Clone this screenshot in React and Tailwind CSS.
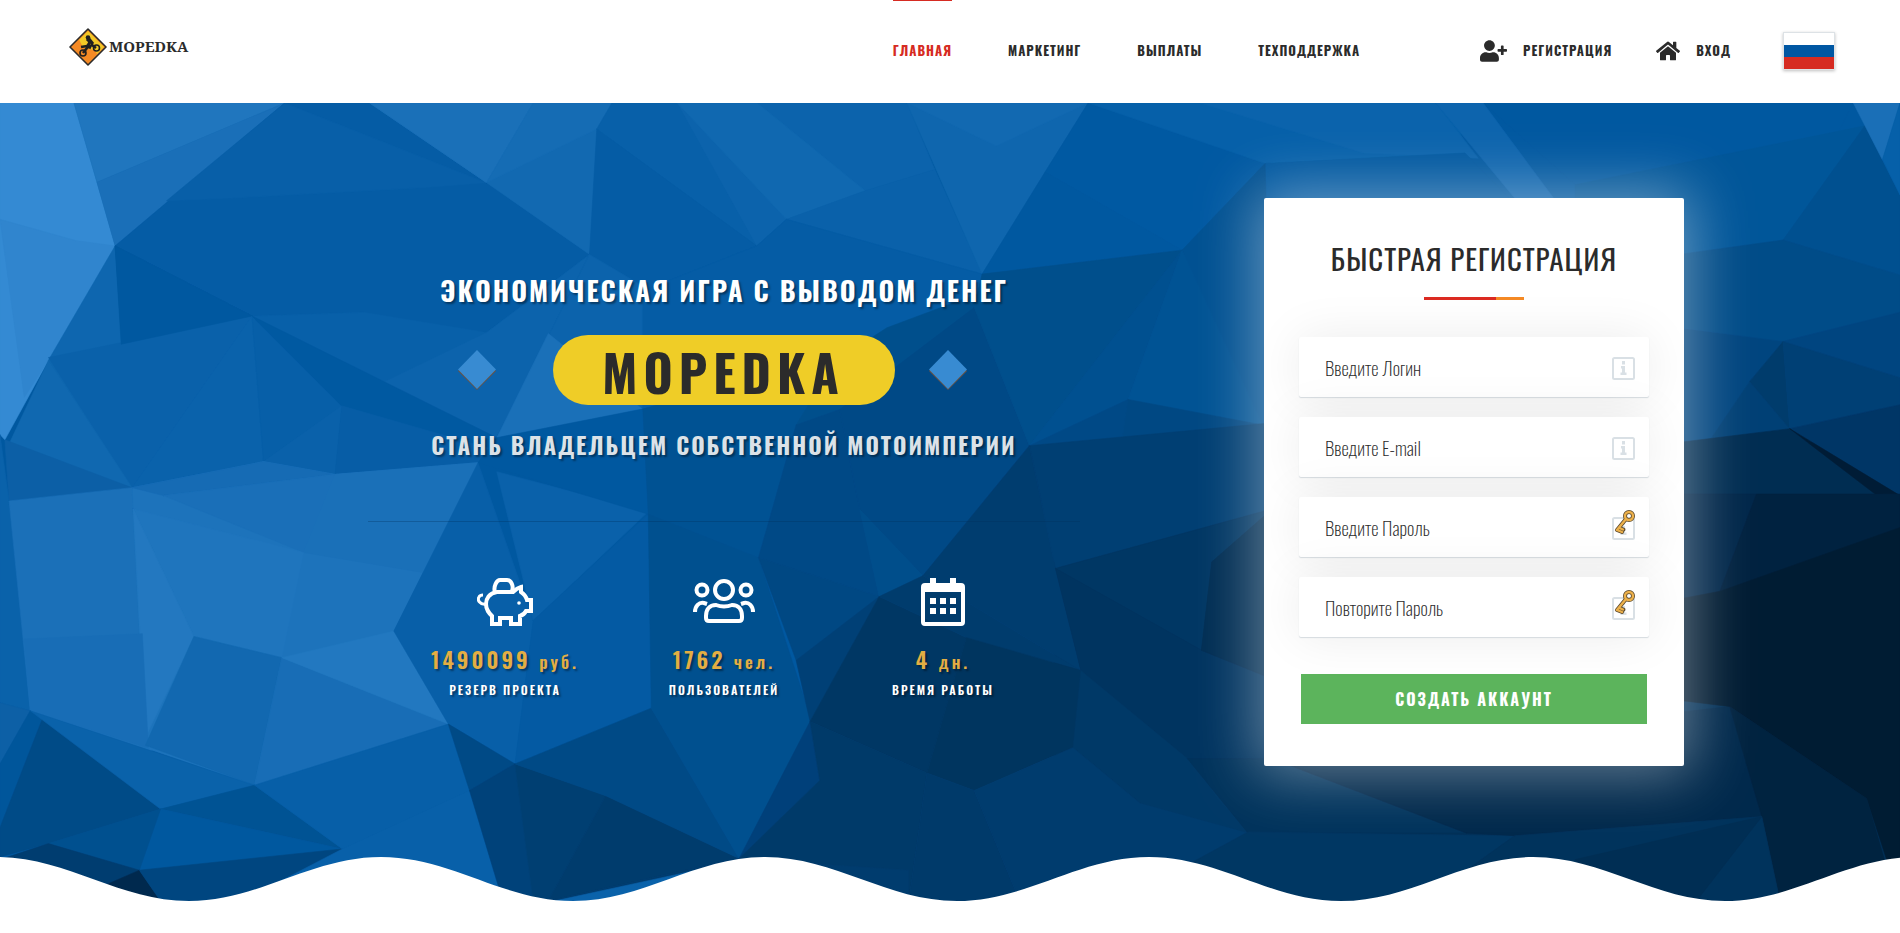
import { FaUserPlus, FaHome } from "react-icons/fa";

const facets = [
  ["#002f56", "1740,700 3136,640 3136,1508 1740,1508"],
  ["#348ad3", "0,6 122,6 190,275 80,490 8,640 0,630"],
  ["#3085ce", "0,225 125,265 190,275 80,490 40,560"],
  ["#2076be", "122,6 470,6 160,155"],
  ["#1a6fb8", "470,6 190,275 160,155"],
  ["#055ca5", "470,6 190,275 416,407 803,438 973,291 803,156 610,6"],
  ["#085fa8", "470,6 803,156 690,166 400,184 275,190"],
  ["#0860a9", "416,407 600,400 803,438 619,539"],
  ["#0c63ac", "803,438 973,291 820,636 619,539"],
  ["#1269b1", "610,6 1010,6 973,291 803,156"],
  ["#1a70b8", "610,6 880,6 803,156"],
  ["#156cb4", "880,6 1010,6 985,55 803,156"],
  ["#0860a9", "1010,6 1118,6 1249,275 985,55"],
  ["#055ca5", "985,55 973,291 1060,360 1249,275"],
  ["#0c63ac", "1118,6 1497,6 1543,131 1428,171 1298,225 1249,275"],
  ["#1068b0", "1118,6 1250,6 1428,171 1298,225"],
  ["#0a61aa", "1428,171 1543,131 1621,328 1298,225"],
  ["#055ca5", "1249,275 1298,225 1621,328 1608,391 1386,480 1060,582 1060,360"],
  ["#0c63ac", "973,291 820,636 1060,582 1060,350"],
  ["#1a70b8", "820,636 1060,582 905,440"],
  ["#0e66af", "190,275 80,490 218,730"],
  ["#0058a0", "190,275 416,407 218,730"],
  ["#0a61aa", "80,485 416,407 218,730"],
  ["#0058a0", "190,275 416,407 200,460"],
  ["#1068b0", "80,490 218,730 12,655"],
  ["#0a62ab", "416,407 218,730 435,681"],
  ["#075fa8", "416,407 435,681 564,576"],
  ["#0059a1", "416,407 564,576 820,690 820,636"],
  ["#0a61aa", "435,681 564,576 553,705"],
  ["#075da6", "564,576 820,660 789,683 553,705"],
  ["#0c5fa6", "8,640 218,730 15,755"],
  ["#0a62aa", "0,630 15,755 50,1150 0,1135"],
  ["#1b70b8", "15,755 218,730 220,770 250,1225 50,1150"],
  ["#1d73bb", "218,730 435,681 553,705 789,683 650,1000 740,1175 420,1290 240,1220"],
  ["#166bb4", "218,730 435,681 553,705 270,745"],
  ["#1a6fb8", "270,745 553,705 501,852"],
  ["#1a70b8", "553,705 789,683 700,890 501,852"],
  ["#1f75bd", "220,770 501,852 465,1050 320,1010"],
  ["#2378c0", "220,770 320,1010 240,1200"],
  ["#186db6", "40,1015 235,1005 245,1220 50,1150"],
  ["#1268b0", "320,1010 465,1050 420,1290 240,1215"],
  ["#186db6", "465,1050 740,1175 420,1290"],
  ["#2278c0", "650,1000 740,1175 465,1050"],
  ["#085fa8", "789,683 650,1000 740,1175 850,1250 880,980"],
  ["#0a61aa", "820,700 1070,775 880,980"],
  ["#045aa3", "1070,780 880,980 850,1250 1075,1145"],
  ["#0d60a6", "0,1135 50,1150 0,1250"],
  ["#00569b", "0,1250 50,1150 70,1165 0,1370"],
  ["#004b87", "70,1165 265,1335 80,1400 0,1425 0,1370"],
  ["#0a62aa", "50,1150 420,1290 265,1335"],
  ["#005394", "420,1290 265,1335 565,1410"],
  ["#00589f", "265,1335 565,1410 230,1450"],
  ["#00508f", "265,1335 230,1450 80,1400"],
  ["#003d70", "80,1400 230,1450 170,1480 0,1430"],
  ["#00294e", "230,1450 265,1508 170,1480"],
  ["#004680", "230,1450 565,1410 420,1508 265,1508"],
  ["#075fa8", "420,1290 740,1175 775,1300 565,1410"],
  ["#0860a9", "565,1410 775,1300 830,1508 400,1508"],
  ["#004a86", "740,1175 850,1250 775,1300"],
  ["#00427a", "775,1300 850,1250 880,1508 830,1508"],
  ["#003f72", "850,1250 1000,1310 905,1508 880,1508"],
  ["#003c6d", "1000,1310 1220,1428 905,1508"],
  ["#004a86", "850,1250 1075,1145 1220,1428 1000,1310"],
  ["#0058a0", "820,636 1061,582 1070,780 789,683"],
  ["#005293", "1061,582 1386,480 1314,612 1252,862 1070,780"],
  ["#004f8c", "1380,490 1464,429 1621,362 1608,391 1699,651 1386,583 1314,612"],
  ["#004986", "1314,612 1386,583 1419,771 1451,935 1252,862"],
  ["#004986", "1386,583 1608,391 1699,651 1523,896 1419,771"],
  ["#004e8b", "1419,771 1523,896 1451,935"],
  ["#00508f", "1070,780 1252,862 1340,1170 1220,1428 1075,1145"],
  ["#004883", "1252,862 1451,935 1314,1055"],
  ["#004076", "1314,1055 1451,935 1337,1170"],
  ["#003764", "1451,935 1595,1012 1530,1267 1337,1170"],
  ["#003c6d", "1451,935 1523,896 1784,1074 1595,1012"],
  ["#00407a", "1337,1170 1353,1281 1220,1428"],
  ["#003a69", "1337,1170 1530,1267 1500,1508 1220,1428 1353,1281"],
  ["#003c6e", "1220,1428 1500,1450 1500,1508 905,1508"],
  ["#0a62aa", "915,1508 1150,1450 1060,1508"],
  ["#0f66ae", "1497,6 1796,6 1725,136 1621,328"],
  ["#1269b1", "1497,6 1796,6 1644,87"],
  ["#0059a2", "1796,6 1725,136 1951,283 2088,120"],
  ["#0058a0", "1725,136 1951,283 1621,328"],
  ["#0660a9", "1796,6 2400,6 2418,100 2088,120"],
  ["#0b63ac", "1980,6 2370,6 2440,110 2250,100"],
  ["#0058a0", "2088,120 2418,100 2540,240 2088,240"],
  ["#0058a0", "2448,6 3059,6 2943,264 2600,160"],
  ["#005699", "2600,160 3078,49 2943,264 2781,290 2600,240"],
  ["#0d64ad", "2370,6 2448,6 2600,240 2540,240"],
  ["#005192", "1951,283 2088,120 2100,640 2068,610"],
  ["#004f8c", "1621,328 1951,283 1699,651 1608,391"],
  ["#005090", "1951,283 1862,564 1699,651"],
  ["#005394", "1951,283 1862,564 2084,612"],
  ["#004986", "1699,651 1862,564 1843,708"],
  ["#004883", "1843,708 1862,564 2084,612"],
  ["#003f73", "1699,651 2100,608 2100,770 1742,882"],
  ["#003d6f", "1523,896 1699,651 1742,882 1784,1074"],
  ["#003764", "1742,882 2100,770 2000,870 1983,1036"],
  ["#003460", "1742,882 1983,1036 2100,1090 2100,1240 1960,1240 1784,1074"],
  ["#00355f", "1595,1012 1784,1074 1771,1219 1608,1300 1530,1267"],
  ["#003967", "1784,1074 1960,1240 2060,1380 1882,1324 1771,1219"],
  ["#003a6a", "1530,1267 1608,1300 1683,1508 1500,1508"],
  ["#003c6e", "1608,1300 1771,1219 1882,1324 2060,1380 2100,1508 1683,1508"],
  ["#00335c", "1960,1240 2100,1240 2420,1380 2060,1380"],
  ["#002e54", "1983,1036 2100,1090 2100,770 2000,870"],
  ["#003763", "2060,1378 2500,1385 2350,1508 1850,1508"],
  ["#00294c", "2100,1240 2855,1142 2908,1349 2500,1385 2420,1380"],
  ["#005090", "3078,49 3136,179 3136,330 2943,264"],
  ["#004c88", "2778,290 2943,264 3136,330 3136,400 2943,455 2778,429"],
  ["#00457f", "2770,429 2943,455 2888,530 2822,641 2770,650"],
  ["#004075", "2822,641 2888,530 2954,619"],
  ["#003c6c", "2943,455 2954,619 2888,530"],
  ["#004580", "2943,455 3136,400 3136,523"],
  ["#004075", "2943,455 3136,523 3136,574 2954,619"],
  ["#003666", "2954,619 3136,574 3136,745"],
  ["#002d52", "2770,645 2954,619 3095,742 2770,742"],
  ["#001c36", "2954,619 3136,745 3095,742"],
  ["#00274a", "2770,742 2899,742 2839,925 2770,940"],
  ["#002240", "2899,742 3136,742 3136,805 2839,925"],
  ["#001c33", "2770,940 2839,925 3136,805 3136,1508 3114,1430 3081,1315 2855,1142 2770,1130"],
  ["#002340", "2855,1142 3081,1315 3130,1508 2938,1508 2908,1349"],
  ["#00335c", "2500,1385 2908,1349 2938,1508 2350,1508"],
  ["#002e54", "2600,1430 2908,1349 2800,1508 2650,1508"],
  ["#1a6fb7", "3059,6 3136,6 3107,113"],
  ["#0660a9", "3136,6 3136,179 3107,113"],
];

function PolyBackdrop() {
  return (
    <svg
      className="absolute inset-0 h-full w-full"
      viewBox="0 6 3136 1502"
      preserveAspectRatio="none"
      aria-hidden="true"
    >
      <rect y="6" width="3136" height="1502" fill="#0058a0" />
      {facets.map(([color, points], i) => (
        <polygon key={i} points={points} fill={color} stroke={color} strokeWidth="1" />
      ))}
    </svg>
  );
}

function Wave() {
  return (
    <svg
      className="absolute bottom-0 left-0 h-[46px] w-full"
      viewBox="0 0 1900 46"
      preserveAspectRatio="none"
      aria-hidden="true"
    >
      <path
        fill="#fff"
        d="M-3 2C67 2 119 46 189 46S311 2 381 2S503 46 573 46S695 2 765 2S887 46 957 46S1079 2 1149 2S1271 46 1341 46S1463 2 1533 2S1655 46 1725 46S1847 2 1917 2V46H-3Z"
      />
    </svg>
  );
}

function LogoMark() {
  return (
    <svg width="38" height="38" viewBox="0 0 38 38" aria-hidden="true">
      <path d="M19 1 37 19 19 37 1 19Z" fill="#f58a25" stroke="#2b2b2b" strokeWidth="1.6" strokeLinejoin="round" />
      <path d="M19 3 35 19 28 26C26 20 20 22 16 20S12 14 10 12Z" fill="#f2c927" />
      <g fill="none" stroke="#1f1f1f">
        <circle cx="14" cy="25" r="3" strokeWidth="1.6" />
        <circle cx="27.5" cy="20" r="3" strokeWidth="1.6" />
        <path d="M14 25l4-5 5-3 4 3M12 19l6-1 4 2" strokeWidth="2.6" />
        <path d="M18 19l3-5-3-3M20 11l4 5" strokeWidth="3" />
      </g>
      <circle cx="19" cy="9.5" r="2.3" fill="#1f1f1f" />
    </svg>
  );
}

function RussianFlag() {
  return (
    <svg className="block h-full w-full" viewBox="0 0 50 36" preserveAspectRatio="none" aria-hidden="true">
      <rect width="50" height="12" fill="#fff" />
      <rect y="12" width="50" height="12" fill="#0057a3" />
      <rect y="24" width="50" height="12" fill="#d62b22" />
    </svg>
  );
}

function Diamond() {
  return (
    <svg width="38" height="40" viewBox="0 0 38 40" aria-hidden="true">
      <path d="M19 2 38 21 19 40 0 21Z" fill="#6b5140" />
      <path d="M19 0 38 19.500 19 39 0 19.500Z" fill="#388bd2" />
    </svg>
  );
}

function PiggyIcon() {
  return (
    <svg width="56" height="48" viewBox="0 0 56 48" fill="none" stroke="#fff" strokeWidth="4" aria-hidden="true">
      <path d="M18 15C16 8 20 2 23 2H30C34 2 37 8 35 13" />
      <path d="M20 14C12 15 9 21 9 26C9 32 12 35 15 38V46H23V40H34V46H43V38C46 37 48 35 49 33H54V22H50C49 18 47 16 44 14V9C40 10 38 12 36 14Z" />
      <path d="M9 26C3 27 0 22 2 19C3 17 5 17 6 17" strokeWidth="3" />
      <circle cx="42" cy="25" r="1.8" fill="#fff" stroke="none" />
    </svg>
  );
}

function UsersIcon() {
  return (
    <svg width="64" height="48" viewBox="0 0 64 48" fill="none" stroke="#fff" strokeWidth="4" aria-hidden="true">
      <circle cx="32" cy="12" r="9" />
      <circle cx="10" cy="12" r="5.5" />
      <circle cx="54" cy="12" r="5.5" />
      <path d="M24 27C29 29 35 29 40 27C47 27 50 32 50 38V40C50 42 49 43 47 43H17C15 43 14 42 14 40V38C14 32 17 27 24 27Z" />
      <path d="M3 34C3 28 7 24 12 25L15 26" />
      <path d="M61 34C61 28 57 24 52 25L49 26" />
    </svg>
  );
}

function CalendarIcon() {
  return (
    <svg width="44" height="48" viewBox="0 0 44 48" aria-hidden="true">
      <path
        fill="#fff"
        fillRule="evenodd"
        d="M9 0H15V5H29V0H35V5H40Q44 5 44 9V44Q44 48 40 48H4Q0 48 0 44V9Q0 5 4 5H9ZM4 14V44H40V14Z"
      />
      <path
        fill="#fff"
        d="M9 20H15V26H9ZM19 20H25V26H19ZM29 20H35V26H29ZM9 30H15V36H9ZM19 30H25V36H19ZM29 30H35V36H29Z"
      />
    </svg>
  );
}

function InfoIcon() {
  return (
    <svg className="absolute top-5 right-[14px]" width="23" height="23" viewBox="0 0 23 23" aria-hidden="true">
      <rect x="1" y="1" width="21" height="21" rx="1.5" fill="none" stroke="#d9e0e5" strokeWidth="2" />
      <path d="M10 4H13V7.500H10ZM9 9H13V15.500H14.500V18H8.500V15.500H10V11.500H9Z" fill="#d9e0e5" />
    </svg>
  );
}

function KeyIcon() {
  return (
    <svg className="absolute top-[13px] right-[14px]" width="21" height="25" viewBox="0 0 21 25" aria-hidden="true">
      <g fill="none" strokeLinecap="round" strokeLinejoin="round">
        <path d="M12 9 3 20L8 22M5.5 18 9.5 19.5" stroke="#5c4a2e" strokeWidth="4" />
        <circle cx="15" cy="6" r="4" stroke="#5c4a2e" strokeWidth="4" />
        <path d="M12 9 3 20L8 22M5.5 18 9 19.5" stroke="#ecb04a" strokeWidth="2.4" />
        <circle cx="15" cy="6" r="4" stroke="#ecb04a" strokeWidth="2.4" />
      </g>
    </svg>
  );
}

const navItems = ["Главная", "Маркетинг", "Выплаты", "Техподдержка"];

const stats = [
  { icon: PiggyIcon, value: "1490099", unit: "руб.", label: "Резерв проекта" },
  { icon: UsersIcon, value: "1762", unit: "чел.", label: "Пользователей" },
  { icon: CalendarIcon, value: "4", unit: "дн.", label: "Время работы" },
];

const fields = [
  { id: "login", type: "text", text: "Введите Логин" },
  { id: "email", type: "email", text: "Введите E-mail" },
  { id: "password", type: "password", text: "Введите Пароль", key: true },
  { id: "repeat", type: "password", text: "Повторите Пароль", key: true },
];

function Header() {
  return (
    <header className="flex h-[103px] items-center bg-white pr-[65px] pb-[2px] pl-[69px] text-[13px] font-bold tracking-[1px] text-[#2b2b2b] uppercase">
      <a href="#" className="mb-2 flex items-center gap-[2px] font-['Noto_Serif','Liberation_Serif',serif] text-[15px] tracking-normal">
        <LogoMark />
        Mopedka
      </a>
      <nav className="ml-auto flex h-full gap-14">
        {navItems.map((item, i) => (
          <a
            key={item}
            href="#"
            className={
              i === 0
                ? "flex items-center border-t border-[#d62b22] text-[#d62b22]"
                : "flex items-center border-t border-transparent"
            }
          >
            {item}
          </a>
        ))}
      </nav>
      <div className="ml-[120px] flex items-center gap-11">
        <a href="#" className="flex items-center gap-4">
          <FaUserPlus className="h-[22px] w-[27px]" />
          Регистрация
        </a>
        <a href="#" className="flex items-center gap-4">
          <FaHome className="h-[22px] w-6" />
          Вход
        </a>
      </div>
      <button
        type="button"
        aria-label="Русский"
        className="ml-[52px] h-[38px] w-[52px] border border-[#dde2e6] shadow-[0_1px_3px_rgba(0,0,0,0.25)]"
      >
        <RussianFlag />
      </button>
    </header>
  );
}

function Intro() {
  return (
    <div className="flex w-[712px] flex-col items-center pt-[67px] font-bold tracking-[2px] text-white">
      <h1 className="text-[27px] leading-[50px] uppercase [text-shadow:2px_2px_2px_rgba(0,0,0,0.4)]">
        Экономическая игра с выводом денег
      </h1>
      <div className="mt-5 flex items-center pr-6">
        <Diamond />
        <div className="mr-[34px] ml-[57px] flex h-[70px] w-[342px] items-center justify-center rounded-full bg-[#efcd27] pt-[2px] text-[50px] leading-none tracking-[6px] text-[#2b2b2b] uppercase">
          Mopedka
        </div>
        <Diamond />
      </div>
      <p className="mt-[18px] text-[23px] leading-[44px] text-[#dbe2e8] uppercase [text-shadow:2px_2px_2px_rgba(0,0,0,0.4)]">
        Стань владельцем собственной мотоимперии
      </p>
      <hr className="mt-[54px] w-full border-t border-[#00305a]/30" />
      <ul className="mt-14 grid w-[657px] grid-cols-3 font-semibold">
        {stats.map(({ icon: Icon, value, unit, label }) => (
          <li key={label} className="flex flex-col items-center [text-shadow:2px_2px_2px_rgba(0,0,0,0.4)]">
            <Icon />
            <p className="mt-[18px] text-[22px] leading-[30px] tracking-[3px] text-[#e3ae43]">
              {value} <span className="text-[17px]">{unit}</span>
            </p>
            <p className="mt-[3px] text-[12px] leading-5 uppercase">{label}</p>
          </li>
        ))}
      </ul>
    </div>
  );
}

function RegisterCard() {
  return (
    <form className="flex w-[420px] flex-col rounded-[2px] bg-white px-[35px] pb-[42px] shadow-[0_0_60px_8px_rgba(255,255,255,0.4)]">
      <h2 className="mt-9 text-center text-[29px] leading-[48px] tracking-[1px] text-[#2b2b2b] uppercase">
        Быстрая регистрация
      </h2>
      <div className="mx-auto mt-[15px] flex h-[3px] w-[100px]">
        <span className="w-[72px] bg-[#dc2b22]" />
        <span className="flex-1 bg-[#f58a25]" />
      </div>
      <div className="mt-[37px] flex flex-col gap-5">
        {fields.map(({ id, type, text, key }) => (
          <div key={id} className="relative">
            <input
              id={id}
              type={type}
              placeholder={text}
              aria-label={text}
              className="block h-[60px] w-full rounded-[2px] bg-white pr-14 pl-[26px] text-[19px] font-extralight text-[#2b2b2b] shadow-[0_1px_1px_#d5dbdf,0_0_50px_rgba(0,0,0,0.08)] outline-none placeholder:text-[#2b2b2b]"
            />
            <InfoIcon />
            {key && <KeyIcon />}
          </div>
        ))}
      </div>
      <button
        type="submit"
        className="mx-[2px] mt-[37px] h-[50px] bg-[#5cb45c] text-[16px] font-bold tracking-[2px] text-white uppercase"
      >
        Создать аккаунт
      </button>
    </form>
  );
}

export default function App() {
  return (
    <div className="min-h-screen bg-white font-['Oswald','Roboto_Condensed',sans-serif]">
      <Header />
      <main className="relative overflow-hidden">
        <PolyBackdrop />
        <div className="relative flex items-start justify-between pt-[95px] pr-[216px] pb-[135px] pl-[368px]">
          <Intro />
          <RegisterCard />
        </div>
        <Wave />
      </main>
    </div>
  );
}
